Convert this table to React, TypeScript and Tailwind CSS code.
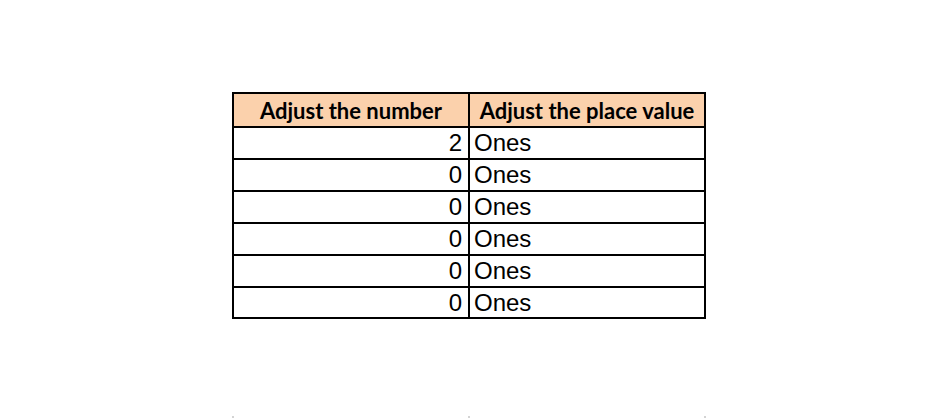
import React from "react";

const values = [2, 0, 0, 0, 0, 0];

export default function App() {
  return (
    <div className="w-[936px] h-[418px] bg-white flex flex-col">
      <div className="pt-[92px] pl-[232px]">
        <div className="w-[474px] border-2 border-black">
          <div className="flex h-[34px] bg-[#fbd1ac] border-b-2 border-black font-['Lato',sans-serif] font-bold text-[22px] text-black">
            <div className="w-[234px] flex items-center justify-center leading-none pt-[1px]">Adjust the number</div>
            <div className="w-[236px] border-l-2 border-black flex items-center justify-center leading-none pt-[1px]">Adjust the place value</div>
          </div>
          {values.map((v, i) => (
            <div
              key={i}
              className={`flex font-['Liberation_Sans',Arial,sans-serif] text-[24px] text-black ${i < values.length - 1 ? "h-[32px] border-b-2 border-black" : "h-[29px]"}`}
            >
              <div className="w-[234px] flex items-center justify-end pr-[6px] leading-none">
                <span>{v}</span>
              </div>
              <div className="w-[236px] border-l-2 border-black flex items-center pl-[4px] leading-none">
                <span>Ones</span>
              </div>
            </div>
          ))}
        </div>
      </div>
      <div className="mt-auto pl-[232px] flex gap-[234px]">
        <div className="w-[2px] h-[2px] bg-[#d4d4d4]" />
        <div className="w-[2px] h-[2px] bg-[#d4d4d4]" />
        <div className="w-[2px] h-[2px] bg-[#d4d4d4]" />
      </div>
    </div>
  );
}
